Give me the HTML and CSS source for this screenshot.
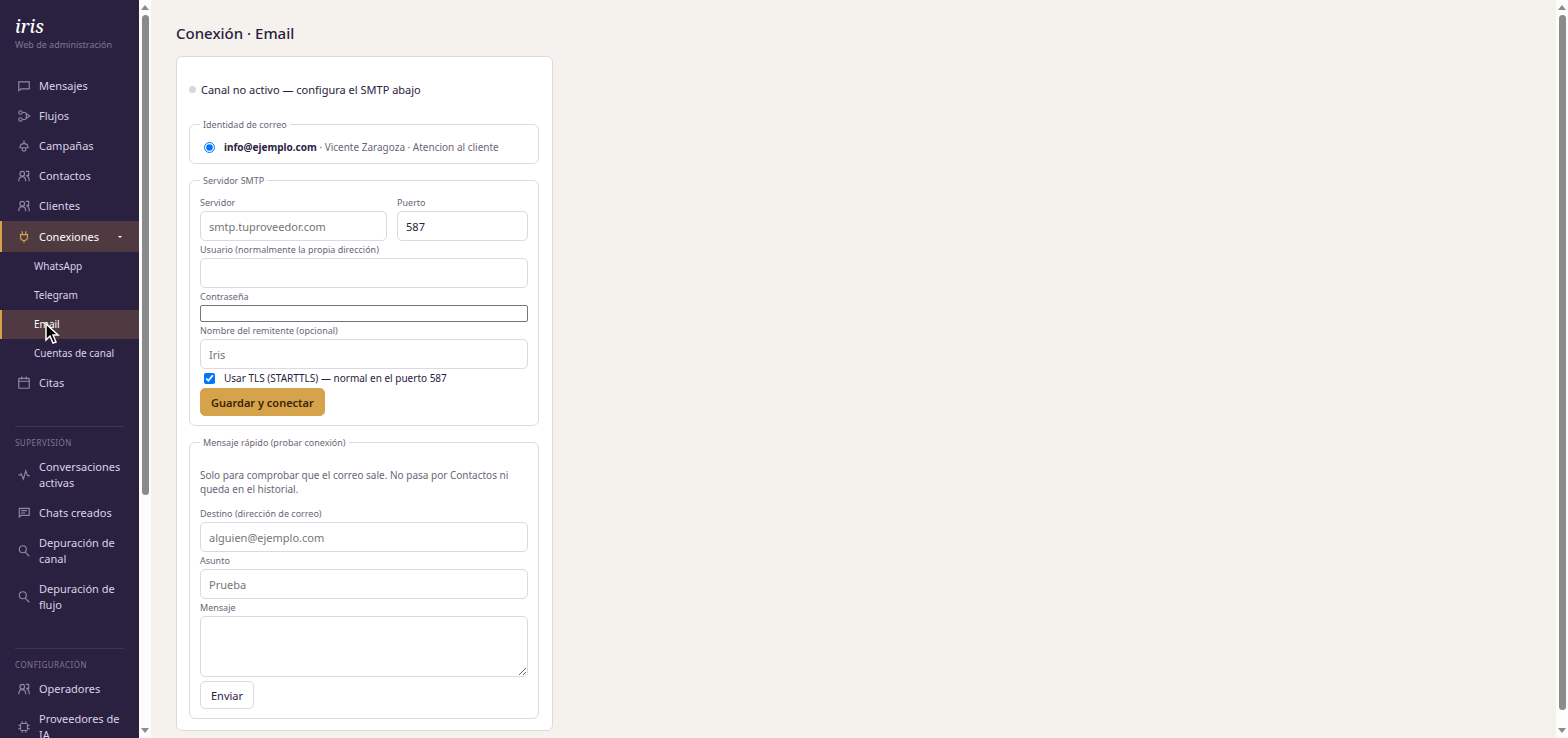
FILE: index.html
```html
<!DOCTYPE html>
<html lang="es">
<head>
  <meta charset="UTF-8">
  <meta name="viewport" content="width=device-width, initial-scale=1.0">
  <title>iris - Web de administración</title>
  <link rel="stylesheet" href="styles.css">
</head>
<body>
  <!-- Iconos compartidos -->
  <svg class="sprite" aria-hidden="true">
    <symbol id="i-msg" viewBox="0 0 24 24"><path d="M3 5h18v12H7l-4 3z"/></symbol>
    <symbol id="i-flow" viewBox="0 0 24 24"><circle cx="6" cy="6" r="3"/><circle cx="6" cy="18" r="3"/><path d="M9 6h4c2 0 3 1 3 3v6c0 2-1 3-3 3H9M16 8l6 4-6 4"/></symbol>
    <symbol id="i-bell" viewBox="0 0 24 24"><path d="M12 2v5M5 15c0-4 3-7 7-7s7 3 7 7zM9 15v3c0 2 1 3 3 3s3-1 3-3v-3"/></symbol>
    <symbol id="i-users" viewBox="0 0 24 24"><circle cx="9" cy="8" r="4"/><path d="M3 21c0-4 2-8 6-8s6 4 6 8M15 4h5v7h-4c3 1 5 4 5 10"/></symbol>
    <symbol id="i-plug" viewBox="0 0 24 24"><path d="M9 2v6M15 2v6M5 8h14M6 8v4c0 4 3 6 6 6s6-2 6-6V8M12 18v4"/></symbol>
    <symbol id="i-cal" viewBox="0 0 24 24"><rect x="3" y="4" width="18" height="17" rx="1"/><path d="M3 9h18M8 1v5M16 1v5"/></symbol>
    <symbol id="i-pulse" viewBox="0 0 24 24"><path d="M2 12h4l1-2 4 9 4-14 3 8h4"/></symbol>
    <symbol id="i-chat" viewBox="0 0 24 24"><path d="M4 4h17v12H7l-3 3zM7 8h10M7 12h7"/></symbol>
    <symbol id="i-search" viewBox="0 0 24 24"><circle cx="10" cy="9" r="6"/><path d="M14 14l7 7"/></symbol>
    <symbol id="i-chip" viewBox="0 0 24 24"><rect x="6" y="6" width="12" height="12" rx="2"/><path d="M9 6V2M15 6V2M9 22v-4M15 22v-4M6 9H2M6 15H2M22 9h-4M22 15h-4"/></symbol>
  </svg>

  <aside class="sidebar">
    <div class="brand">
      <div class="brand-name">iris</div>
      <div class="brand-sub">Web de administración</div>
    </div>
    <nav>
      <a class="nav-item" href="#mensajes"><svg class="icon"><use href="#i-msg"/></svg><span>Mensajes</span></a>
      <a class="nav-item" href="#flujos"><svg class="icon"><use href="#i-flow"/></svg><span>Flujos</span></a>
      <a class="nav-item" href="#campanas"><svg class="icon"><use href="#i-bell"/></svg><span>Campañas</span></a>
      <a class="nav-item" href="#contactos"><svg class="icon"><use href="#i-users"/></svg><span>Contactos</span></a>
      <a class="nav-item" href="#clientes"><svg class="icon"><use href="#i-users"/></svg><span>Clientes</span></a>
      <a class="nav-item active" href="#conexiones"><svg class="icon"><use href="#i-plug"/></svg><span>Conexiones</span><i class="caret"></i></a>
      <a class="sub-item" href="#whatsapp">WhatsApp</a>
      <a class="sub-item" href="#telegram">Telegram</a>
      <a class="sub-item active" href="#email">Email
        <svg class="cursor" viewBox="0 0 14 22"><path d="M1 1v16l4-4 3 7 3-1-3-7h5z"/></svg>
      </a>
      <a class="sub-item" href="#cuentas">Cuentas de canal</a>
      <a class="nav-item" href="#citas"><svg class="icon"><use href="#i-cal"/></svg><span>Citas</span></a>

      <div class="nav-title">Supervisión</div>
      <a class="nav-item" href="#activas"><svg class="icon"><use href="#i-pulse"/></svg><span>Conversaciones activas</span></a>
      <a class="nav-item" href="#chats"><svg class="icon"><use href="#i-chat"/></svg><span>Chats creados</span></a>
      <a class="nav-item" href="#dep-canal"><svg class="icon"><use href="#i-search"/></svg><span>Depuración de canal</span></a>
      <a class="nav-item" href="#dep-flujo"><svg class="icon"><use href="#i-search"/></svg><span>Depuración de flujo</span></a>

      <div class="nav-title">Configuración</div>
      <a class="nav-item" href="#operadores"><svg class="icon"><use href="#i-users"/></svg><span>Operadores</span></a>
      <a class="nav-item" href="#proveedores"><svg class="icon"><use href="#i-chip"/></svg><span>Proveedores de IA</span></a>
    </nav>
  </aside>
  <div class="scrollbar scrollbar-nav"><i class="arrow-up"></i><i class="thumb"></i><i class="arrow-down"></i></div>

  <main>
    <h1>Conexión · Email</h1>

    <div class="card">
      <p class="status"><span class="dot"></span>Canal no activo — configura el SMTP abajo</p>

      <fieldset>
        <legend>Identidad de correo</legend>
        <label class="identity">
          <input type="radio" name="identidad" checked>
          <span><b>info@ejemplo.com</b> · Vicente Zaragoza · Atencion al cliente</span>
        </label>
      </fieldset>

      <fieldset>
        <legend>Servidor SMTP</legend>
        <div class="row">
          <div>
            <label class="field-label" for="servidor">Servidor</label>
            <input class="field" id="servidor" type="text" placeholder="smtp.tuproveedor.com">
          </div>
          <div>
            <label class="field-label" for="puerto">Puerto</label>
            <input class="field" id="puerto" type="text" value="587">
          </div>
        </div>
        <label class="field-label" for="usuario">Usuario (normalmente la propia dirección)</label>
        <input class="field" id="usuario" type="text">
        <label class="field-label" for="clave">Contraseña</label>
        <input class="field-plain" id="clave" type="password">
        <label class="field-label" for="remitente">Nombre del remitente (opcional)</label>
        <input class="field" id="remitente" type="text" placeholder="Iris">
        <label class="check"><input type="checkbox" checked><span>Usar TLS (STARTTLS) — normal en el puerto 587</span></label>
        <button type="button" class="btn btn-primary">Guardar y conectar</button>
      </fieldset>

      <fieldset>
        <legend>Mensaje rápido (probar conexión)</legend>
        <p class="hint">Solo para comprobar que el correo sale. No pasa por Contactos ni queda en el historial.</p>
        <label class="field-label" for="destino">Destino (dirección de correo)</label>
        <input class="field" id="destino" type="email" placeholder="alguien@ejemplo.com">
        <label class="field-label" for="asunto">Asunto</label>
        <input class="field" id="asunto" type="text" placeholder="Prueba">
        <label class="field-label" for="mensaje">Mensaje</label>
        <textarea class="field area" id="mensaje"></textarea>
        <button type="button" class="btn">Enviar</button>
      </fieldset>
    </div>
  </main>
  <div class="scrollbar scrollbar-page"><i class="arrow-up"></i><i class="thumb"></i><i class="arrow-down"></i></div>
</body>
</html>
```
FILE: styles.css
```css
* {
  box-sizing: border-box;
}

body {
  margin: 0;
  height: 100vh;
  overflow: hidden;
  display: flex;
  font-family: 'Noto Sans', 'Open Sans', sans-serif;
  font-size: 11px;
  color: #2a2140;
  background: #f5f2ed;
}

.sprite {
  position: absolute;
  width: 0;
  height: 0;
}

/* Sidebar */
.sidebar {
  flex: 0 0 139px;
  overflow: hidden;
  background: #2a2140;
}

.brand {
  height: 71px;
  padding: 14px 15px 0;
}

.brand-name {
  font-family: 'Noto Serif', 'DejaVu Serif', serif;
  font-style: italic;
  font-weight: 500;
  font-size: 18px;
  line-height: 24px;
  color: #fff;
}

.brand-sub {
  font-size: 9px;
  line-height: 14px;
  color: #7f7891;
  white-space: nowrap;
}

.nav-item,
.sub-item {
  display: flex;
  align-items: center;
  color: #d9d3e6;
  text-decoration: none;
  border-left: 2px solid transparent;
}

.nav-item {
  gap: 8px;
  padding: 7px 12px 7px 15px;
  font-size: 11px;
  line-height: 16px;
}

.nav-item.active {
  padding-top: 8px;
}

.sub-item {
  position: relative;
  padding-left: 32px;
  font-size: 10px;
  line-height: 29px;
}

.nav-item.active,
.sub-item.active {
  color: #fff;
  background: #4f3a42;
  border-left-color: #d6a24a;
}

.icon {
  flex: none;
  width: 14px;
  height: 14px;
  fill: none;
  stroke: #8f88a1;
  stroke-width: 2;
}

.active .icon {
  stroke: #d6a24a;
}

.caret {
  margin-left: auto;
  margin-right: 5px;
  border: 2px solid transparent;
  border-top-color: #fff;
  border-bottom: 0;
}

.cursor {
  position: absolute;
  left: 43px;
  top: 13px;
  width: 14px;
  height: 22px;
  z-index: 1;
  overflow: visible;
  fill: #000;
  stroke: #fff;
  stroke-width: 1.5;
}

.nav-title {
  margin: 28px 15px 0;
  border-top: 1px solid #3f3654;
  padding-top: 8px;
  height: 26px;
  font-size: 8px;
  line-height: 16px;
  letter-spacing: 0.06em;
  text-transform: uppercase;
  color: #7f7891;
}

/* Barras de desplazamiento */
.scrollbar {
  flex: 0 0 12px;
  display: flex;
  flex-direction: column;
  align-items: center;
  padding: 5px 0;
  gap: 5px;
  background: #fcfcfc;
}

.thumb {
  width: 7px;
  border-radius: 4px;
  background: #8b8b8b;
}

.scrollbar-nav .thumb {
  height: 66%;
}

.scrollbar-page .thumb {
  height: 95.5%;
}

.arrow-up,
.arrow-down {
  border: 4px solid transparent;
}

.arrow-up {
  border-top: 0;
  border-bottom: 5px solid #8b8b8b;
}

.arrow-down {
  margin-top: auto;
  border-bottom: 0;
  border-top: 5px solid #8b8b8b;
}

/* Contenido */
main {
  flex: 1;
  padding: 22px 25px 0;
}

h1 {
  margin: 0 0 12px;
  font-size: 15px;
  line-height: 22px;
  font-weight: 500;
}

.card {
  max-width: 377px;
  padding: 12px 13px 11px 12px;
  background: #fff;
  border: 1px solid #dcdae0;
  border-radius: 6px;
}

.status {
  display: flex;
  align-items: center;
  gap: 5px;
  margin: 12px 0 19px;
  font-size: 11px;
  line-height: 17px;
}

.dot {
  width: 7px;
  height: 7px;
  border-radius: 50%;
  background: #d8d8dc;
}

fieldset {
  margin: 0 0 9px;
  padding: 6px 10px 9px;
  border: 1px solid #dcdae0;
  border-radius: 6px;
}

fieldset:last-child {
  margin-bottom: 0;
}

legend {
  padding: 0 3px;
  font-size: 9px;
  line-height: 15px;
  color: #6b6577;
}

.identity,
.check {
  display: flex;
  align-items: center;
  gap: 9px;
  font-size: 10px;
}

.identity {
  margin-top: 2px;
  line-height: 14px;
  color: #6b6577;
}

.identity b {
  color: #2a2140;
}

.identity input,
.check input {
  width: 11px;
  height: 11px;
  margin: 0 0 0 4px;
}

.check {
  line-height: 19px;
}

.row {
  display: grid;
  grid-template-columns: 10fr 7fr;
  gap: 10px;
}

.field-label {
  display: block;
  font-size: 9px;
  line-height: 17px;
  color: #6b6577;
}

.field {
  display: block;
  width: 100%;
  height: 30px;
  padding: 0 8px;
  font-family: inherit;
  font-size: 11px;
  color: #2a2140;
  background: #fff;
  border: 1px solid #dcdae0;
  border-radius: 5px;
}

.field::placeholder {
  color: #757575;
}

.field-plain {
  display: block;
  width: 100%;
  height: 17px;
  border: 1px solid #767676;
  border-radius: 2px;
}

.area {
  height: 61px;
  margin-bottom: 4px;
  resize: vertical;
}

.btn {
  display: block;
  height: 28px;
  padding: 0 10px;
  font-family: inherit;
  font-size: 11px;
  color: #2a2140;
  background: #fff;
  border: 1px solid #dcdae0;
  border-radius: 5px;
}

.btn-primary {
  font-weight: 600;
  color: #3a2608;
  background: #d6a24a;
  border-color: #d6a24a;
}

.hint {
  margin: 12px 0 9px;
  font-size: 10px;
  line-height: 14px;
  color: #6b6577;
}
```
